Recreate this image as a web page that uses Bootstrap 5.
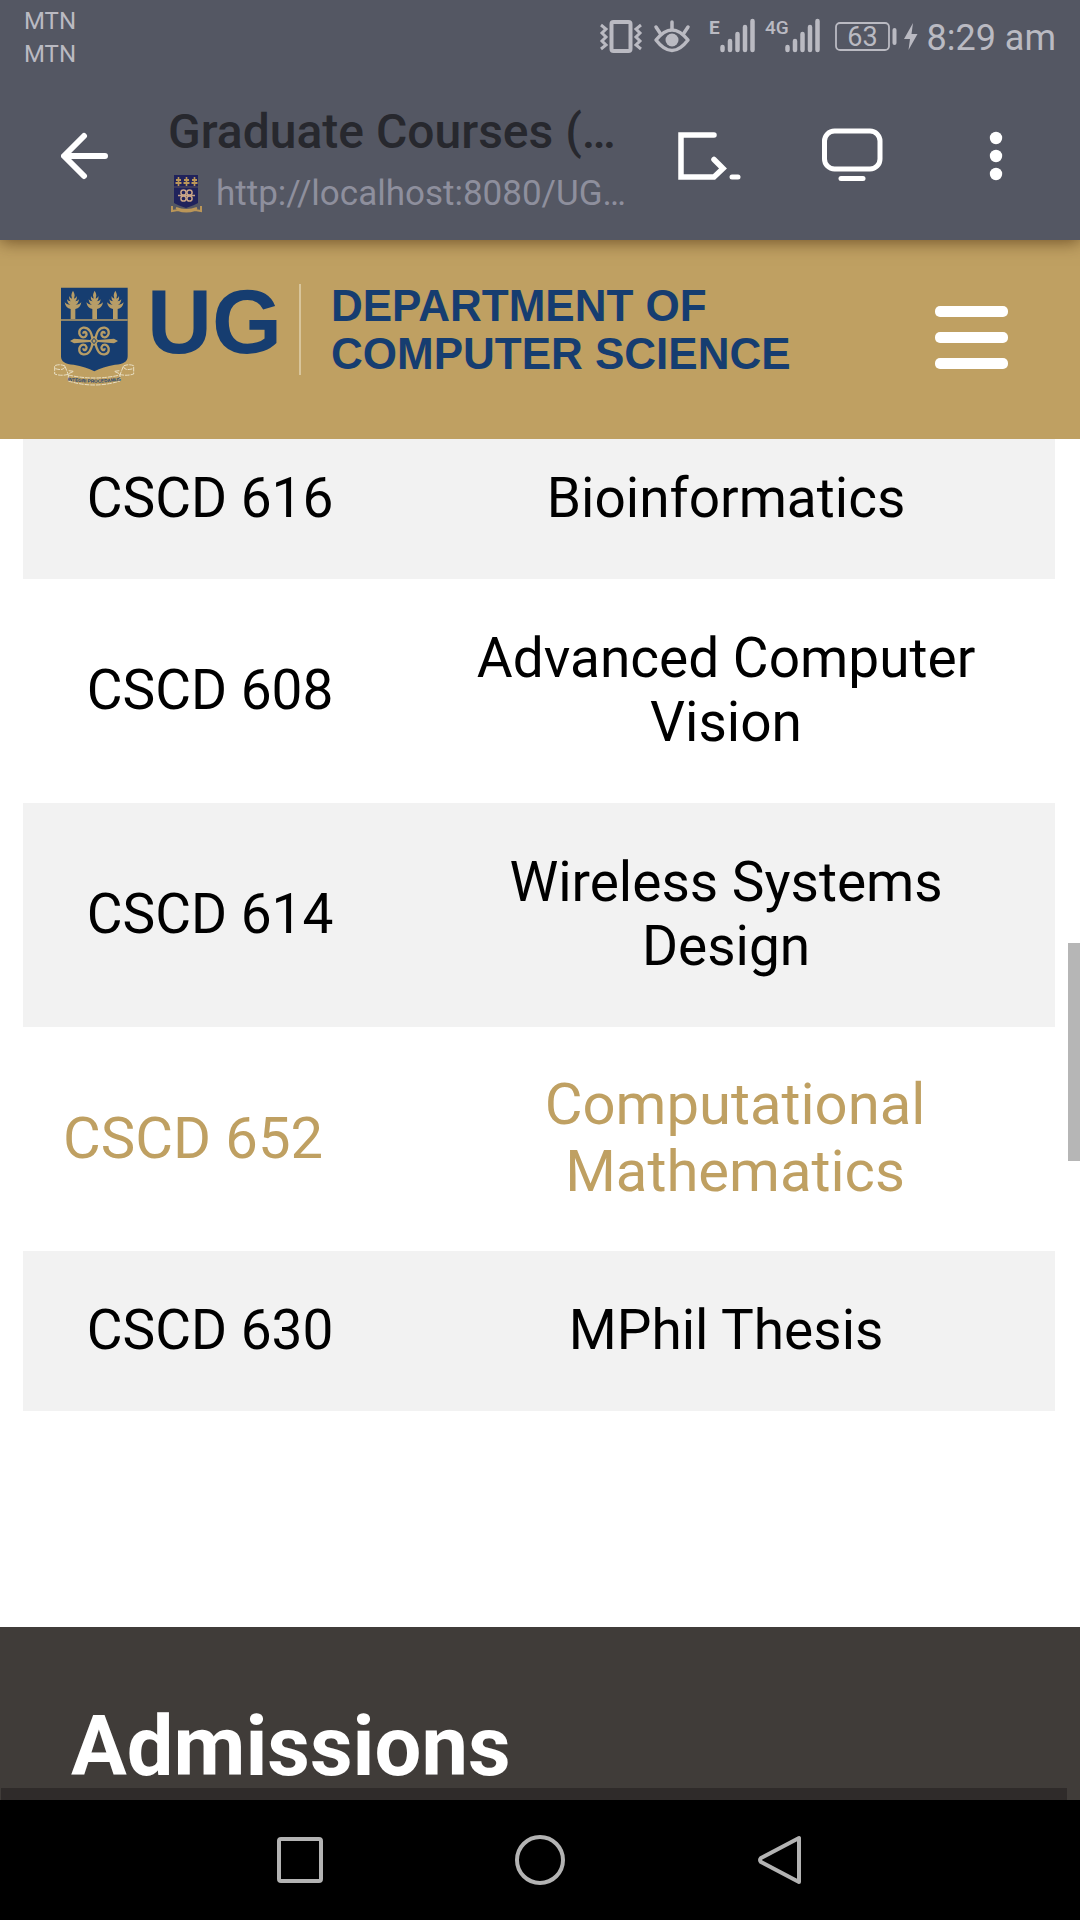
<!DOCTYPE html>
<html lang="en">
<head>
<meta charset="utf-8">
<meta name="viewport" content="width=device-width, initial-scale=1">
<title>Graduate Courses</title>
<link href="https://cdn.jsdelivr.net/npm/bootstrap@5.3.0/dist/css/bootstrap.min.css" rel="stylesheet">
<style>
  body { font-family: Roboto, "Noto Sans", sans-serif; background: #fff; color: #000; overflow-x: hidden; }
  svg { display: block; flex: none; }
  .btn-plain { background: none; border: 0; padding: 0; color: #fff; }

  .top-shell { background: #545763; height: 240px; box-shadow: 0 2px 16px rgba(60, 30, 0, .6); z-index: 3; }
  .status-row { height: 72px; padding: 5px 24px 0 24px; color: #babac2; }
  .carrier { font-size: 24px; line-height: 33px; }
  .clock { font-size: 36px; line-height: 44px; }
  .status-icons { padding-top: 11px; }
  .status-icons svg { margin-top: -1px; }
  .tool-row { height: 168px; padding: 32px 77px 0 61px; }
  .page-id { margin-left: 59px; }
  .page-name { font-size: 48px; line-height: 56px; font-weight: 500; color: #27282e; }
  .page-url { font-size: 35px; line-height: 44px; color: #8e8f9d; margin-top: 12px; }
  .page-url svg { margin: 0 14px 0 3px; }
  .tool-icons { padding-top: 24px; }

  .site-head { background: #bfa062; height: 199px; padding: 44px 72px 0 52px; z-index: 2; }
  .brand-mark { color: #163d70; font-family: "Liberation Sans", Arial, sans-serif; font-weight: 700; text-decoration: none; }
  .brand-ug { font-size: 90px; line-height: 76px; margin-left: 10px; }
  .brand-rule { width: 2px; height: 91px; background: #d8c59b; margin-left: 17px; }
  .brand-dept { font-size: 44px; line-height: 48px; margin: -2px 0 0 30px; }
  .menu-btn { padding-top: 22px; }
  .menu-btn i { display: block; width: 73px; height: 11px; border-radius: 5px; background: #fff; margin-bottom: 15px; }

  .course-wrap { margin-top: -20px; padding: 0 25px 0 23px; }
  .course-list { width: 100%; table-layout: fixed; text-align: center; font-size: 55px; line-height: 64px; }
  .course-list tr:nth-child(odd) { background: #f2f2f2; }
  .course-list td { padding: 47px 64px 49px; vertical-align: middle; }
  .course-list td:first-child { width: 36.25%; padding-left: 0; padding-right: 0; }
  .course-list .is-active td { color: #bfa062; font-size: 58px; line-height: 67px; padding: 44px 55px 46px 73px; }
  .course-list .is-active td:first-child { padding: 44px 34px 46px 0; }

  .site-foot { background: #403c39; margin-top: 216px; padding-top: 78px; overflow: hidden; }
  .site-foot h2 { font-size: 83px; line-height: 83px; font-weight: 700; color: #fff; margin: 0; padding-left: 71px; }
  .foot-panel { background: #2f2b2a; height: 12px; margin: 0 13px 0 1px; }
  .sys-nav { background: #000; height: 120px; gap: 190px; }
  .scroll-thumb { right: 0; top: 943px; width: 12px; height: 218px; background: #b6b6b6; }
</style>
</head>
<body class="position-relative">
<div class="top-shell position-relative">
  <div class="status-row d-flex justify-content-between">
    <div class="carrier">MTN<br>MTN</div>
    <div class="status-icons d-flex">
      <svg width="328" height="44" viewBox="599 15 328 44" fill="none" stroke="#babac2" aria-hidden="true">
        <rect x="611.500" y="22" width="19" height="29" rx="2" stroke-width="4"/>
        <path d="M601 25l5 4-4 4 4 4-4 4 4 4-5 4M641 25l-5 4 4 4-4 4 4 4-4 4 5 4" stroke-width="3"/>
        <path d="M656 40Q672 20 688 40Q672 61 656 40Z" stroke-width="3.500" stroke-linejoin="round"/>
        <circle cx="672" cy="40" r="6.500" fill="#babac2" stroke="none"/>
        <path d="M672 22v7M656 27l4 6M688 27l-4 6" stroke-width="3.500" stroke-linecap="round"/>
        <g stroke-width="4.500" stroke-linecap="round">
          <path d="M722.500 47v3M730 41v9M737.500 34v16M745 27v23M752.500 21v29"/>
          <path d="M787.500 47v3M795 41v9M802.500 34v16M810 27v23M817.500 21v29"/>
        </g>
        <rect x="836" y="23" width="53" height="27" rx="4" stroke-width="1.800"/>
        <path d="M894.500 30v13" stroke-width="4" stroke-linecap="round"/>
        <path d="M913 23l-9 16h6l-1.500 11 9-16h-6z" fill="#babac2" stroke="none"/>
        <g fill="#babac2" stroke="none" font-family="Roboto, sans-serif">
          <text x="709" y="34" font-size="19" font-weight="700">E</text>
          <text x="765" y="34" font-size="19" font-weight="500">4G</text>
          <text x="862.500" y="46" font-size="27" text-anchor="middle">63</text>
        </g>
      </svg>
      <div class="clock">8:29 am</div>
    </div>
  </div>
  <div class="tool-row d-flex">
    <button class="btn-plain align-self-start tool-icons" type="button" aria-label="Back">
      <svg width="48" height="56" viewBox="61 128 48 56" fill="none" stroke="#fff" stroke-width="6" stroke-linecap="round" stroke-linejoin="round"><path d="M105 156H65M84 136L64 156l20 20"/></svg>
    </button>
    <div class="page-id flex-grow-1 text-nowrap">
      <div class="page-name">Graduate Courses (…</div>
      <div class="page-url d-flex align-items-center">
        <svg width="31" height="38" viewBox="0 0 31 38" aria-hidden="true">
          <path d="M3 0h24v28q-3 2-12 5Q6 30 3 28z" fill="#20235c"/>
          <path d="M3 12h24" stroke="#5a5260" stroke-width="1"/>
          <g stroke="#bb9658" stroke-width="1.600" fill="none"><path d="M7.500 2v9M15.500 2v9M23.500 2v9"/><path d="M5 5h5M4.500 8h6M13 5h5M12.500 8h6M21 5h5M20.500 8h6" stroke-width="2"/></g>
          <g stroke="#c8a487" stroke-width="1.500" fill="none"><circle cx="12.500" cy="17.500" r="2.600"/><circle cx="18.500" cy="17.500" r="2.600"/><circle cx="12.500" cy="23.500" r="2.600"/><circle cx="18.500" cy="23.500" r="2.600"/><path d="M7 20.500h17"/></g>
          <path d="M1 31v5l6-1q8 3 17 0l6 1v-5M5 33q10 4 21 0" stroke="#bb9658" stroke-width="2" fill="none"/>
        </svg>
        <span>http://localhost:8080/UG…</span>
      </div>
    </div>
    <div class="tool-icons d-flex align-items-start">
      <button class="btn-plain" type="button" aria-label="Open in editor">
        <svg width="66" height="56" viewBox="677 128 66 56" fill="none" stroke="#fff">
          <path d="M714 135H681V177H714L723 168.500L714 159.500" stroke-width="5.500" stroke-linecap="round"/>
          <path d="M732 177h6" stroke-width="5" stroke-linecap="round"/>
        </svg>
      </button>
      <button class="btn-plain" type="button" aria-label="Desktop view">
        <svg width="220" height="56" viewBox="743 128 220 56" fill="none" stroke="#fff">
          <rect x="824.500" y="131" width="55.500" height="38" rx="10" stroke-width="5"/>
          <path d="M841 178.500h22" stroke-width="5" stroke-linecap="round"/>
        </svg>
      </button>
      <button class="btn-plain" type="button" aria-label="More">
        <svg width="40" height="56" viewBox="963 128 40 56" fill="#fff">
          <circle cx="996" cy="138" r="6.200"/><circle cx="996" cy="156" r="6.200"/><circle cx="996" cy="174" r="6.200"/>
        </svg>
      </button>
    </div>
  </div>
</div>

<header class="site-head d-flex justify-content-between position-relative">
  <a class="brand-mark d-flex align-items-start text-nowrap" href="#">
    <svg width="85" height="102" viewBox="156 161 255 306" aria-hidden="true">
      <path d="M183 172H383V378Q383 402 345 403Q308 409 283 423Q258 409 221 403Q183 402 183 378Z" fill="#163d70"/>
      <path d="M183 269H383" stroke="#b79d67" stroke-width="4"/>
      <defs>
        <path id="palm" d="M0 -44q5 8 5 14l-2 10q6-2 8-8q2 12-5 16q8 0 12-6q-1 12-10 17q10 0 17-8q-3 18-18 20v30H-7V11Q-22 9-25-9Q-18-1-8-1Q-17-6-18-18Q-14-12-6-12Q-13-16-11-28Q-9-22-3-20L-5-30Q-5-36 0-44Z"/>
        <path id="curl" d="M-4-4Q-10-42-32-40Q-46-37-44-22Q-40-8-27-12Q-18-20-26-27Q-32-28-32-22"/>
      </defs>
      <g fill="#b79d67"><use href="#palm" x="219" y="225"/><use href="#palm" x="284" y="225"/><use href="#palm" x="346" y="225"/></g>
      <g fill="none" stroke="#b79d67" stroke-width="7">
        <use href="#curl" transform="translate(282 332)"/>
        <use href="#curl" transform="translate(282 332) scale(-1 1)"/>
        <use href="#curl" transform="translate(282 332) scale(1 -1)"/>
        <use href="#curl" transform="translate(282 332) scale(-1 -1)"/>
      </g>
      <path d="M210 332l12-7 48 4 12-12 12 12 48-4 12 7-12 7-48-4-12 12-12-12-48 4z" fill="#b79d67"/>
      <path d="M282 324l7 8-7 8-7-8z" fill="none" stroke="#163d70" stroke-width="3"/>
      <path d="M205 432q-22 6-41-1v-25q15-6 31 1q-2 16-29 8m29-7l10 25M206 421l15 2-15 7M358 432q22 6 43-1v-25q-15-6-31 1q2 16 29 8m-29-7l-10 25M358 421l-15 2 15 7M205 434v18q78 24 155 0v-18M205 434q78 18 155 0" fill="none" stroke="#e9dfc3" stroke-width="3" stroke-dasharray="14 3"/>
      <path id="ribbon" d="M200 450q83 14 166 0" fill="none"/>
      <text font-size="14" fill="#163d70" font-family="Liberation Sans, Arial, sans-serif" font-weight="700" text-anchor="middle"><textPath href="#ribbon" startOffset="50%">INTEGRI PROCEDAMUS</textPath></text>
    </svg>
    <span class="brand-ug">UG</span>
    <span class="brand-rule"></span>
    <span class="brand-dept">DEPARTMENT OF<br>COMPUTER SCIENCE</span>
  </a>
  <button class="btn-plain menu-btn align-self-start" type="button" aria-label="Menu"><i></i><i></i><i></i></button>
</header>

<main class="course-wrap">
  <table class="course-list">
    <tbody>
      <tr><td>CSCD 616</td><td>Bioinformatics</td></tr>
      <tr><td>CSCD 608</td><td>Advanced Computer Vision</td></tr>
      <tr><td>CSCD 614</td><td>Wireless Systems Design</td></tr>
      <tr class="is-active"><td>CSCD 652</td><td>Computational Mathematics</td></tr>
      <tr><td>CSCD 630</td><td>MPhil Thesis</td></tr>
    </tbody>
  </table>
</main>

<footer class="site-foot">
  <h2>Admissions</h2>
  <div class="foot-panel"></div>
</footer>

<nav class="sys-nav d-flex justify-content-center align-items-center" aria-label="System">
  <button class="btn-plain" type="button" aria-label="Recent apps"><svg width="50" height="50" viewBox="0 0 50 50" fill="none" stroke="#b3b3b3" stroke-width="4"><rect x="4" y="4" width="42" height="42" rx="2"/></svg></button>
  <button class="btn-plain" type="button" aria-label="Home"><svg width="50" height="50" viewBox="0 0 50 50" fill="none" stroke="#b3b3b3" stroke-width="4"><circle cx="25" cy="25" r="23"/></svg></button>
  <button class="btn-plain" type="button" aria-label="Go back"><svg width="50" height="50" viewBox="0 0 50 50" fill="none" stroke="#b3b3b3" stroke-width="4" stroke-linejoin="round"><path d="M44 3V47L6 27Q4 25 6 23Z"/></svg></button>
</nav>
<div class="scroll-thumb position-absolute"></div>
<script src="https://cdn.jsdelivr.net/npm/bootstrap@5.3.0/dist/js/bootstrap.bundle.min.js"></script>
</body>
</html>
